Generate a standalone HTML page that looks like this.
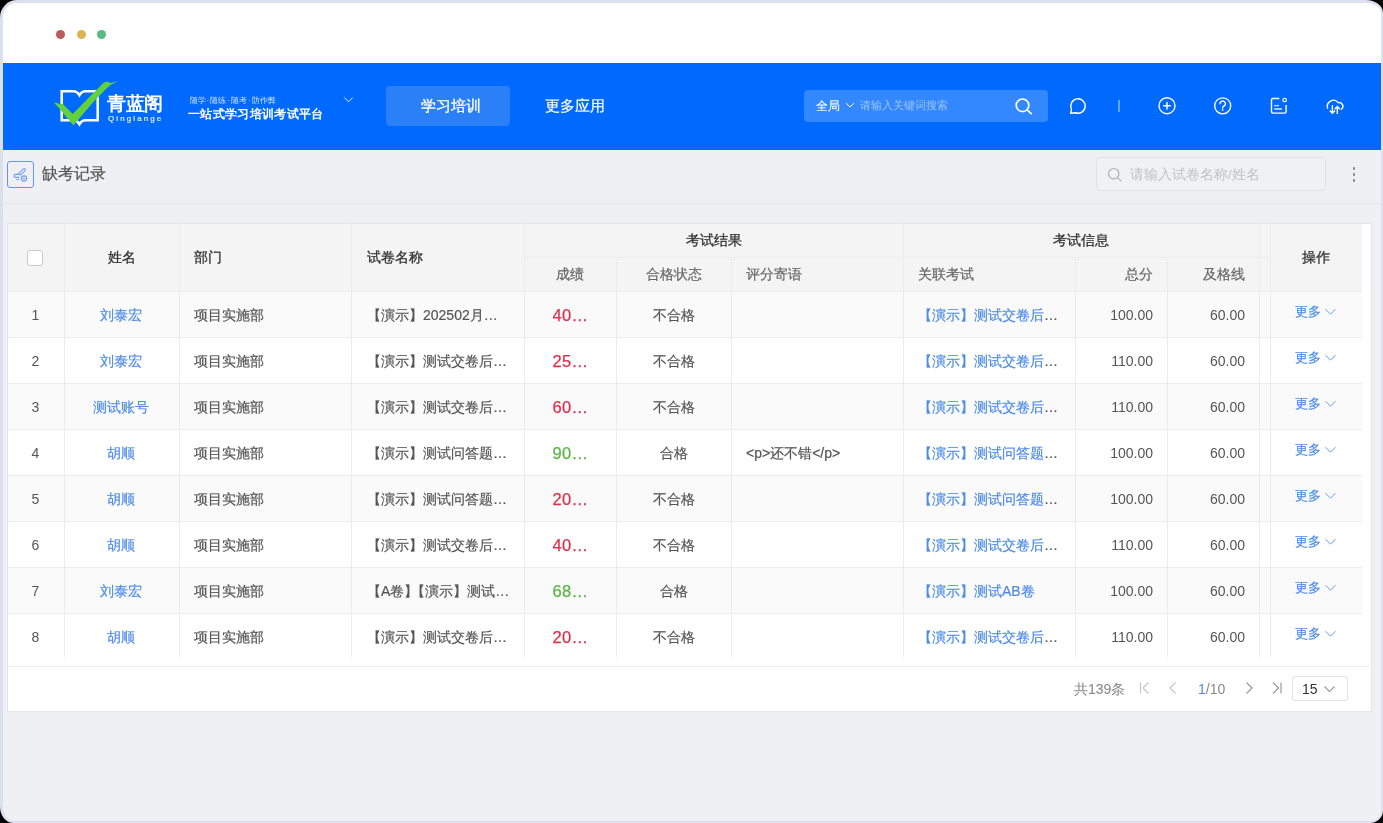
<!DOCTYPE html><html><head><meta charset="utf-8"><title>缺考记录</title><style>
*{margin:0;padding:0;box-sizing:border-box}
html,body{width:1383px;height:823px;overflow:hidden;background:#000}
body{font-family:"Liberation Sans",sans-serif;position:relative}
#root{position:absolute;left:0;top:0;width:1383px;height:823px;will-change:transform}
.abs{position:absolute}
#frame{position:absolute;left:0;top:0;width:1383px;height:823px;background:#dcdfee;border-radius:17px 17px 12.5px 13.5px / 17.5px 13px 12.5px 16.5px;overflow:hidden}
#win{position:absolute;left:3px;top:3px;width:1377.6px;height:817.5px;background:#eff0f4;border-radius:14px 14.5px 10px 11px / 14.5px 10.5px 10px 13.5px;overflow:hidden}
#topbar{position:absolute;left:0;top:0;width:1378px;height:60px;background:#fff}
.dot{position:absolute;width:9px;height:9px;border-radius:50%;top:27.2px}
#nav{position:absolute;left:0;top:60px;width:1378px;height:87px;background:#006aff}
.t{position:absolute;white-space:nowrap;line-height:1;-webkit-text-stroke:0.2px currentColor}
.cell{position:absolute;white-space:nowrap;overflow:hidden;text-overflow:ellipsis;font-size:14px;color:#555;line-height:46px;-webkit-text-stroke:0.2px currentColor}
.vl{position:absolute;width:1px;background:#ebebf0}
.hl{position:absolute;height:1px;background:#ebebf0}
.link{color:#4e8ce6}
.num{-webkit-text-stroke:0}
</style></head><body>
<div id="root">
<div id="frame"><div id="win">
<div id="topbar">
<div class="dot" style="left:53px;background:#b95c5c"></div>
<div class="dot" style="left:73.5px;background:#dcb452"></div>
<div class="dot" style="left:94px;background:#58bb84"></div>
</div>
<div id="nav"></div>
</div></div>
<svg class="abs" style="left:50px;top:76px" width="72" height="52" viewBox="50 76 72 52">
<path d="M61.7 91.2 H73.5 Q77 91.2 79.4 95.2 Q81.8 91.2 85.3 91.2 H97.7 V120.3 H85.3 Q81.8 120.3 79.4 124.3 Q77 120.3 73.5 120.3 H61.7 Z" fill="none" stroke="#fff" stroke-width="2.5" stroke-linejoin="miter"/>
<path d="M54.1 102.4 L57.5 102.9 L59.5 104.3 L62.6 103.8 L72.7 113.9 L103.8 82.4 L107.9 81.6 L109.8 83 L113 82.4 L117.8 80.7 L112.3 84.3 L110.8 84.8 L105.2 89.7 L94 101.3 L73.4 125.2 Z" fill="#62d13c"/>
</svg>
<div class="t" style="left:107px;top:94px;font-size:19px;font-weight:bold;color:#fff;letter-spacing:-0.5px;-webkit-text-stroke:0">青蓝阁</div>
<div class="t" style="left:108px;top:115px;font-size:8px;color:rgba(255,255,255,.85);letter-spacing:2.1px">Qinglange</div>
<div class="t" style="left:189.5px;top:96.5px;font-size:8px;color:rgba(255,255,255,.8);-webkit-text-stroke:0">随学<span style="display:inline-block;width:4.8px;text-align:center">·</span>随练<span style="display:inline-block;width:4.8px;text-align:center">·</span>随考<span style="display:inline-block;width:4.8px;text-align:center">·</span>防作弊</div>
<div class="t" style="left:188px;top:108px;font-size:12.3px;font-weight:bold;letter-spacing:0.35px;color:#fff;-webkit-text-stroke:0">一站式学习培训考试平台</div>
<svg class="abs" style="left:343px;top:96px" width="11" height="8"><path d="M1.3 1.5 L5.5 5.8 L9.7 1.5" fill="none" stroke="rgba(255,255,255,.85)" stroke-width="1"/></svg>
<div class="abs" style="left:386px;top:86px;width:124px;height:40px;background:#2b80f7;border-radius:4px"></div>
<div class="t" style="left:420.5px;top:98px;font-size:15px;font-weight:500;letter-spacing:0.3px;color:#fff;-webkit-text-stroke:0.3px #fff">学习培训</div>
<div class="t" style="left:545px;top:98px;font-size:15px;color:#fff">更多应用</div>
<div class="abs" style="left:804px;top:90px;width:244px;height:32px;background:#3387ff;border-radius:4px"></div>
<div class="t" style="left:816px;top:99.5px;font-size:12px;color:#fff;-webkit-text-stroke:0.1px #fff">全局</div>
<svg class="abs" style="left:845px;top:102px" width="10" height="7"><path d="M1 1.2 L5 5 L9 1.2" fill="none" stroke="#fff" stroke-width="1"/></svg>
<div class="t" style="left:860px;top:100px;font-size:11px;color:rgba(255,255,255,.5);-webkit-text-stroke:0">请输入关键词搜索</div>
<svg class="abs" style="left:1012px;top:95px" width="24" height="22"><circle cx="10.5" cy="10.3" r="6.3" fill="none" stroke="#fff" stroke-width="1.7"/><path d="M15 14.8 L19.3 18.6" stroke="#fff" stroke-width="1.7" stroke-linecap="round"/></svg>
<svg class="abs" style="left:1066px;top:94px" width="24" height="24"><path d="M5.47 15.04 A7.2 7.2 0 1 1 9.54 18.77 L4.7 19.3 Z" fill="none" stroke="#fff" stroke-width="1.4" stroke-linejoin="round"/></svg>
<div class="abs" style="left:1118.3px;top:100px;width:1.3px;height:12px;background:rgba(255,255,255,.4)"></div>
<svg class="abs" style="left:1155px;top:94px" width="24" height="24"><circle cx="12" cy="11.7" r="8" fill="none" stroke="#fff" stroke-width="1.35"/><path d="M8.2 11.7 H15.8 M12 7.9 V15.5" stroke="#fff" stroke-width="1.45"/></svg>
<svg class="abs" style="left:1211px;top:94px" width="24" height="24"><circle cx="11.7" cy="11.8" r="8" fill="none" stroke="#fff" stroke-width="1.35"/><path d="M9 9.7 A2.7 2.7 0 1 1 13.1 12 Q11.6 12.7 11.6 13.9 V14.1" fill="none" stroke="#fff" stroke-width="1.4" stroke-linecap="round"/><circle cx="11.6" cy="15.9" r="0.85" fill="#fff"/></svg>
<svg class="abs" style="left:1267px;top:94px" width="24" height="24"><path d="M12.3 4.5 H6 A1.5 1.5 0 0 0 4.5 6 V17.6 A1.5 1.5 0 0 0 6 19.1 H17.6 A1.5 1.5 0 0 0 19.1 17.6 V11.1" fill="none" stroke="#fff" stroke-width="1.4"/><circle cx="17.6" cy="6" r="1.75" fill="none" stroke="#fff" stroke-width="1.2"/><path d="M7.2 11.6 H12 M7.2 15 H15" stroke="rgba(255,255,255,.85)" stroke-width="1.4"/></svg>
<svg class="abs" style="left:1322px;top:94px" width="24" height="24"><path d="M5.6 14.2 A6.1 6.1 0 0 1 16.2 8.6 A3.8 3.8 0 0 1 19.4 15.3" fill="none" stroke="#fff" stroke-width="1.4" stroke-linecap="round"/><path d="M10.4 11.8 V19.1 M8.2 17.1 L10.4 19.3 L12.6 17.1 M15.3 12.4 V19.4 M13.1 14.7 L15.3 12.4 L17.5 14.7" fill="none" stroke="#fff" stroke-width="1.4" stroke-linecap="round" stroke-linejoin="round"/></svg>
<div class="abs" style="left:7px;top:161px;width:27.4px;height:26.8px;border:1.1px solid #6496ef;border-radius:3px"></div>
<svg class="abs" style="left:7px;top:161px" width="27" height="27"><g transform="rotate(-45 15.3 10.65)"><rect x="11.4" y="9.4" width="7.8" height="2.5" rx="1.2" fill="none" stroke="#6c9cf0" stroke-width="1"/></g><path d="M12.2 13.4 H8.6 A1.5 1.5 0 0 0 8.6 16.4 H12.4 M9.3 18.5 H12.1" fill="none" stroke="#6c9cf0" stroke-width="1.1"/><circle cx="17" cy="17.5" r="2.6" fill="none" stroke="#6c9cf0" stroke-width="1.1"/><circle cx="17" cy="17.5" r="0.9" fill="#6c9cf0"/></svg>
<div class="t" style="left:42px;top:166px;font-size:16px;color:#555">缺考记录</div>
<div class="abs" style="left:1096px;top:157px;width:230px;height:34px;border:1px solid #e1e2e8;border-radius:4px;background:#f0f1f5"></div>
<svg class="abs" style="left:1105px;top:165px" width="20" height="20"><circle cx="8.7" cy="8.7" r="5.2" fill="none" stroke="#b0b0b0" stroke-width="1.2"/><path d="M12.6 12.6 L15.8 15.8" stroke="#b0b0b0" stroke-width="1.2" stroke-linecap="round"/></svg>
<div class="t" style="left:1130px;top:168px;font-size:13.5px;color:#c2c2c6;-webkit-text-stroke:0">请输入试卷名称/姓名</div>
<div class="abs" style="left:1352.5px;top:167.0px;width:2.7px;height:2.7px;border-radius:50%;background:#858585"></div>
<div class="abs" style="left:1352.5px;top:173.0px;width:2.7px;height:2.7px;border-radius:50%;background:#858585"></div>
<div class="abs" style="left:1352.5px;top:179.0px;width:2.7px;height:2.7px;border-radius:50%;background:#858585"></div>
<div class="hl" style="left:3px;top:203px;width:1377px;background:#e6e7ec"></div>
<div class="abs" style="left:7px;top:223px;width:1365px;height:489px;background:#fff;border:1px solid #e6e6ea"></div>
<div class="abs" style="left:8px;top:224px;width:1354px;height:67px;background:#f4f4f5"></div>
<div class="abs" style="left:8px;top:292px;width:1354px;height:46px;background:#fafafa"></div>
<div class="abs" style="left:8px;top:338px;width:1354px;height:46px;background:#fff"></div>
<div class="hl" style="left:8px;top:337px;width:1354px"></div>
<div class="abs" style="left:8px;top:384px;width:1354px;height:46px;background:#fafafa"></div>
<div class="hl" style="left:8px;top:383px;width:1354px"></div>
<div class="abs" style="left:8px;top:430px;width:1354px;height:46px;background:#fff"></div>
<div class="hl" style="left:8px;top:429px;width:1354px"></div>
<div class="abs" style="left:8px;top:476px;width:1354px;height:46px;background:#fafafa"></div>
<div class="hl" style="left:8px;top:475px;width:1354px"></div>
<div class="abs" style="left:8px;top:522px;width:1354px;height:46px;background:#fff"></div>
<div class="hl" style="left:8px;top:521px;width:1354px"></div>
<div class="abs" style="left:8px;top:568px;width:1354px;height:46px;background:#fafafa"></div>
<div class="hl" style="left:8px;top:567px;width:1354px"></div>
<div class="abs" style="left:8px;top:614px;width:1354px;height:43px;background:#fff"></div>
<div class="hl" style="left:8px;top:613px;width:1354px"></div>
<div class="hl" style="left:8px;top:291px;width:1354px;background:#ececf0"></div>
<div class="hl" style="left:524px;top:257px;width:746px"></div>
<div class="vl" style="left:64px;top:223px;height:434px"></div>
<div class="vl" style="left:179px;top:223px;height:434px"></div>
<div class="vl" style="left:351px;top:223px;height:434px"></div>
<div class="vl" style="left:524px;top:223px;height:434px"></div>
<div class="vl" style="left:616px;top:257px;height:400px"></div>
<div class="vl" style="left:731px;top:257px;height:400px"></div>
<div class="vl" style="left:903px;top:223px;height:434px"></div>
<div class="vl" style="left:1075px;top:257px;height:400px"></div>
<div class="vl" style="left:1167px;top:257px;height:400px"></div>
<div class="vl" style="left:1259px;top:223px;height:434px"></div>
<div class="vl" style="left:1270px;top:223px;height:434px"></div>
<div class="abs" style="left:27px;top:250px;width:16px;height:16px;border:1px solid #c9c9cc;border-radius:3px;background:#fff"></div>
<div class="abs" style="left:64px;width:115px;text-align:center;top:223px;height:68px;line-height:68px;font-size:14px;color:#333;font-weight:500;white-space:nowrap;-webkit-text-stroke:0.3px #333">姓名</div>
<div class="abs" style="left:194px;width:157px;text-align:left;top:223px;height:68px;line-height:68px;font-size:14px;color:#333;font-weight:500;white-space:nowrap;-webkit-text-stroke:0.3px #333">部门</div>
<div class="abs" style="left:367px;width:157px;text-align:left;top:223px;height:68px;line-height:68px;font-size:14px;color:#333;font-weight:500;white-space:nowrap;-webkit-text-stroke:0.3px #333">试卷名称</div>
<div class="abs" style="left:524px;width:379px;text-align:center;top:223px;height:34px;line-height:34px;font-size:14px;color:#333;font-weight:500;white-space:nowrap;-webkit-text-stroke:0.3px #333">考试结果</div>
<div class="abs" style="left:903px;width:356px;text-align:center;top:223px;height:34px;line-height:34px;font-size:14px;color:#333;font-weight:500;white-space:nowrap;-webkit-text-stroke:0.3px #333">考试信息</div>
<div class="abs" style="left:1270px;width:92px;text-align:center;top:223px;height:68px;line-height:68px;font-size:14px;color:#333;font-weight:500;white-space:nowrap;-webkit-text-stroke:0.3px #333">操作</div>
<div class="abs" style="left:524px;width:92px;text-align:center;top:257px;height:34px;line-height:34px;font-size:14px;color:#666;font-weight:normal;white-space:nowrap;-webkit-text-stroke:0.2px #666">成绩</div>
<div class="abs" style="left:616px;width:115px;text-align:center;top:257px;height:34px;line-height:34px;font-size:14px;color:#666;font-weight:normal;white-space:nowrap;-webkit-text-stroke:0.2px #666">合格状态</div>
<div class="abs" style="left:746px;width:157px;text-align:left;top:257px;height:34px;line-height:34px;font-size:14px;color:#666;font-weight:normal;white-space:nowrap;-webkit-text-stroke:0.2px #666">评分寄语</div>
<div class="abs" style="left:918px;width:157px;text-align:left;top:257px;height:34px;line-height:34px;font-size:14px;color:#666;font-weight:normal;white-space:nowrap;-webkit-text-stroke:0.2px #666">关联考试</div>
<div class="abs" style="left:1075px;width:78px;text-align:right;top:257px;height:34px;line-height:34px;font-size:14px;color:#666;font-weight:normal;white-space:nowrap;-webkit-text-stroke:0.2px #666">总分</div>
<div class="abs" style="left:1167px;width:78px;text-align:right;top:257px;height:34px;line-height:34px;font-size:14px;color:#666;font-weight:normal;white-space:nowrap;-webkit-text-stroke:0.2px #666">及格线</div>
<div class="cell num" style="left:7px;width:57px;top:292px;text-align:center">1</div>
<div class="cell link" style="left:64px;width:113px;top:292px;text-align:center">刘泰宏</div>
<div class="cell" style="left:194px;width:150px;top:292px">项目实施部</div>
<div class="cell" style="left:367px;width:143px;top:292px;">【演示】202502月考试记录</div>
<div class="cell num" style="left:552.5px;width:38px;top:292px;font-size:16.5px;letter-spacing:0.3px;color:#dc304e;-webkit-text-stroke:0.25px #dc304e">40.00</div>
<div class="cell" style="left:616px;width:115px;top:292px;text-align:center">不合格</div>
<div class="cell" style="left:918px;width:142px;top:292px"><span class="link">【演示】测试交卷后显示</span></div>
<div class="cell num" style="left:1075px;width:78px;top:292px;text-align:right">100.00</div>
<div class="cell num" style="left:1167px;width:78px;top:292px;text-align:right">60.00</div>
<div class="cell link" style="left:1295px;width:30px;top:289px;font-size:13px">更多</div>
<svg class="abs" style="left:1324px;top:308px" width="13" height="9"><path d="M1.5 1.2 L6.5 6.2 L11.5 1.2" fill="none" stroke="#6a9be8" stroke-width="1"/></svg>
<div class="cell num" style="left:7px;width:57px;top:338px;text-align:center">2</div>
<div class="cell link" style="left:64px;width:113px;top:338px;text-align:center">刘泰宏</div>
<div class="cell" style="left:194px;width:150px;top:338px">项目实施部</div>
<div class="cell" style="left:367px;width:143px;top:338px;">【演示】测试交卷后显示成绩</div>
<div class="cell num" style="left:552.5px;width:38px;top:338px;font-size:16.5px;letter-spacing:0.3px;color:#dc304e;-webkit-text-stroke:0.25px #dc304e">25.00</div>
<div class="cell" style="left:616px;width:115px;top:338px;text-align:center">不合格</div>
<div class="cell" style="left:918px;width:142px;top:338px"><span class="link">【演示】测试交卷后显示</span></div>
<div class="cell num" style="left:1075px;width:78px;top:338px;text-align:right">110.00</div>
<div class="cell num" style="left:1167px;width:78px;top:338px;text-align:right">60.00</div>
<div class="cell link" style="left:1295px;width:30px;top:335px;font-size:13px">更多</div>
<svg class="abs" style="left:1324px;top:354px" width="13" height="9"><path d="M1.5 1.2 L6.5 6.2 L11.5 1.2" fill="none" stroke="#6a9be8" stroke-width="1"/></svg>
<div class="cell num" style="left:7px;width:57px;top:384px;text-align:center">3</div>
<div class="cell link" style="left:64px;width:113px;top:384px;text-align:center">测试账号</div>
<div class="cell" style="left:194px;width:150px;top:384px">项目实施部</div>
<div class="cell" style="left:367px;width:143px;top:384px;">【演示】测试交卷后显示成绩</div>
<div class="cell num" style="left:552.5px;width:38px;top:384px;font-size:16.5px;letter-spacing:0.3px;color:#dc304e;-webkit-text-stroke:0.25px #dc304e">60.00</div>
<div class="cell" style="left:616px;width:115px;top:384px;text-align:center">不合格</div>
<div class="cell" style="left:918px;width:142px;top:384px"><span class="link">【演示】测试交卷后显示</span></div>
<div class="cell num" style="left:1075px;width:78px;top:384px;text-align:right">110.00</div>
<div class="cell num" style="left:1167px;width:78px;top:384px;text-align:right">60.00</div>
<div class="cell link" style="left:1295px;width:30px;top:381px;font-size:13px">更多</div>
<svg class="abs" style="left:1324px;top:400px" width="13" height="9"><path d="M1.5 1.2 L6.5 6.2 L11.5 1.2" fill="none" stroke="#6a9be8" stroke-width="1"/></svg>
<div class="cell num" style="left:7px;width:57px;top:430px;text-align:center">4</div>
<div class="cell link" style="left:64px;width:113px;top:430px;text-align:center">胡顺</div>
<div class="cell" style="left:194px;width:150px;top:430px">项目实施部</div>
<div class="cell" style="left:367px;width:143px;top:430px;">【演示】测试问答题评分</div>
<div class="cell num" style="left:552.5px;width:38px;top:430px;font-size:16.5px;letter-spacing:0.3px;color:#5bb645;-webkit-text-stroke:0.25px #5bb645">90.00</div>
<div class="cell" style="left:616px;width:115px;top:430px;text-align:center">合格</div>
<div class="cell" style="left:746px;width:143px;top:430px">&lt;p&gt;还不错&lt;/p&gt;</div>
<div class="cell" style="left:918px;width:142px;top:430px"><span class="link">【演示】测试问答题评分</span></div>
<div class="cell num" style="left:1075px;width:78px;top:430px;text-align:right">100.00</div>
<div class="cell num" style="left:1167px;width:78px;top:430px;text-align:right">60.00</div>
<div class="cell link" style="left:1295px;width:30px;top:427px;font-size:13px">更多</div>
<svg class="abs" style="left:1324px;top:446px" width="13" height="9"><path d="M1.5 1.2 L6.5 6.2 L11.5 1.2" fill="none" stroke="#6a9be8" stroke-width="1"/></svg>
<div class="cell num" style="left:7px;width:57px;top:476px;text-align:center">5</div>
<div class="cell link" style="left:64px;width:113px;top:476px;text-align:center">胡顺</div>
<div class="cell" style="left:194px;width:150px;top:476px">项目实施部</div>
<div class="cell" style="left:367px;width:143px;top:476px;">【演示】测试问答题评分</div>
<div class="cell num" style="left:552.5px;width:38px;top:476px;font-size:16.5px;letter-spacing:0.3px;color:#dc304e;-webkit-text-stroke:0.25px #dc304e">20.00</div>
<div class="cell" style="left:616px;width:115px;top:476px;text-align:center">不合格</div>
<div class="cell" style="left:918px;width:142px;top:476px"><span class="link">【演示】测试问答题评分</span></div>
<div class="cell num" style="left:1075px;width:78px;top:476px;text-align:right">100.00</div>
<div class="cell num" style="left:1167px;width:78px;top:476px;text-align:right">60.00</div>
<div class="cell link" style="left:1295px;width:30px;top:473px;font-size:13px">更多</div>
<svg class="abs" style="left:1324px;top:492px" width="13" height="9"><path d="M1.5 1.2 L6.5 6.2 L11.5 1.2" fill="none" stroke="#6a9be8" stroke-width="1"/></svg>
<div class="cell num" style="left:7px;width:57px;top:522px;text-align:center">6</div>
<div class="cell link" style="left:64px;width:113px;top:522px;text-align:center">胡顺</div>
<div class="cell" style="left:194px;width:150px;top:522px">项目实施部</div>
<div class="cell" style="left:367px;width:143px;top:522px;">【演示】测试交卷后显示成绩</div>
<div class="cell num" style="left:552.5px;width:38px;top:522px;font-size:16.5px;letter-spacing:0.3px;color:#dc304e;-webkit-text-stroke:0.25px #dc304e">40.00</div>
<div class="cell" style="left:616px;width:115px;top:522px;text-align:center">不合格</div>
<div class="cell" style="left:918px;width:142px;top:522px"><span class="link">【演示】测试交卷后显示</span></div>
<div class="cell num" style="left:1075px;width:78px;top:522px;text-align:right">110.00</div>
<div class="cell num" style="left:1167px;width:78px;top:522px;text-align:right">60.00</div>
<div class="cell link" style="left:1295px;width:30px;top:519px;font-size:13px">更多</div>
<svg class="abs" style="left:1324px;top:538px" width="13" height="9"><path d="M1.5 1.2 L6.5 6.2 L11.5 1.2" fill="none" stroke="#6a9be8" stroke-width="1"/></svg>
<div class="cell num" style="left:7px;width:57px;top:568px;text-align:center">7</div>
<div class="cell link" style="left:64px;width:113px;top:568px;text-align:center">刘泰宏</div>
<div class="cell" style="left:194px;width:150px;top:568px">项目实施部</div>
<div class="cell" style="left:367px;width:143px;top:568px;">【A卷<span style="letter-spacing:-7px">】</span>【演示】测试AB卷</div>
<div class="cell num" style="left:552.5px;width:38px;top:568px;font-size:16.5px;letter-spacing:0.3px;color:#5bb645;-webkit-text-stroke:0.25px #5bb645">68.00</div>
<div class="cell" style="left:616px;width:115px;top:568px;text-align:center">合格</div>
<div class="cell" style="left:918px;width:142px;top:568px"><span class="link">【演示】测试AB卷</span></div>
<div class="cell num" style="left:1075px;width:78px;top:568px;text-align:right">100.00</div>
<div class="cell num" style="left:1167px;width:78px;top:568px;text-align:right">60.00</div>
<div class="cell link" style="left:1295px;width:30px;top:565px;font-size:13px">更多</div>
<svg class="abs" style="left:1324px;top:584px" width="13" height="9"><path d="M1.5 1.2 L6.5 6.2 L11.5 1.2" fill="none" stroke="#6a9be8" stroke-width="1"/></svg>
<div class="cell num" style="left:7px;width:57px;top:614px;text-align:center">8</div>
<div class="cell link" style="left:64px;width:113px;top:614px;text-align:center">胡顺</div>
<div class="cell" style="left:194px;width:150px;top:614px">项目实施部</div>
<div class="cell" style="left:367px;width:143px;top:614px;">【演示】测试交卷后显示成绩</div>
<div class="cell num" style="left:552.5px;width:38px;top:614px;font-size:16.5px;letter-spacing:0.3px;color:#dc304e;-webkit-text-stroke:0.25px #dc304e">20.00</div>
<div class="cell" style="left:616px;width:115px;top:614px;text-align:center">不合格</div>
<div class="cell" style="left:918px;width:142px;top:614px"><span class="link">【演示】测试交卷后显示</span></div>
<div class="cell num" style="left:1075px;width:78px;top:614px;text-align:right">110.00</div>
<div class="cell num" style="left:1167px;width:78px;top:614px;text-align:right">60.00</div>
<div class="cell link" style="left:1295px;width:30px;top:611px;font-size:13px">更多</div>
<svg class="abs" style="left:1324px;top:630px" width="13" height="9"><path d="M1.5 1.2 L6.5 6.2 L11.5 1.2" fill="none" stroke="#6a9be8" stroke-width="1"/></svg>
<div class="hl" style="left:8px;top:666px;width:1362px;background:#ececf0"></div>
<div class="t" style="left:1074px;top:682px;font-size:14px;color:#8c8c8c;-webkit-text-stroke:0.1px #8c8c8c">共139条</div>
<svg class="abs" style="left:1138px;top:680px" width="14" height="16"><path d="M2.5 2.5 V13.5 M10.5 2.5 L5 8 L10.5 13.5" fill="none" stroke="#c6c6c9" stroke-width="1.2"/></svg>
<svg class="abs" style="left:1166px;top:680px" width="14" height="16"><path d="M9.5 2.5 L4 8 L9.5 13.5" fill="none" stroke="#c6c6c9" stroke-width="1.2"/></svg>
<div class="t" style="left:1198px;top:682px;font-size:14px;color:#888;-webkit-text-stroke:0"><span style="color:#4b89e4">1</span>/10</div>
<svg class="abs" style="left:1243px;top:680px" width="14" height="16"><path d="M3.5 2.5 L9 8 L3.5 13.5" fill="none" stroke="#999" stroke-width="1.2"/></svg>
<svg class="abs" style="left:1270px;top:680px" width="14" height="16"><path d="M3 2.5 L8.5 8 L3 13.5 M11 2.5 V13.5" fill="none" stroke="#999" stroke-width="1.2"/></svg>
<div class="abs" style="left:1292px;top:676px;width:56px;height:25px;border:1px solid #e3e3e6;border-radius:3px;background:#fff"></div>
<div class="t" style="left:1302px;top:682px;font-size:14px;color:#333;-webkit-text-stroke:0">15</div>
<svg class="abs" style="left:1323px;top:685px" width="14" height="9"><path d="M1.5 1.5 L6.5 6.5 L11.5 1.5" fill="none" stroke="#999" stroke-width="1.1"/></svg>
</div></body></html>
